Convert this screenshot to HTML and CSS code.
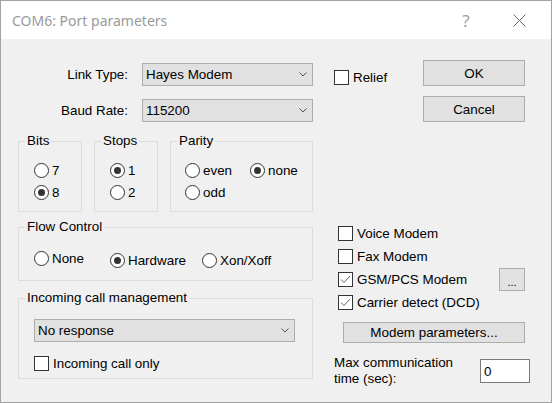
FILE: index.html
```html
<!DOCTYPE html>
<html lang="en">
<head>
    <meta charset="UTF-8">
    <meta name="viewport" content="width=device-width, initial-scale=1.0">
    <title>COM6: Port parameters</title>
    <link rel="stylesheet" href="styles.css">
</head>
<body>
    <div class="window">
        <div class="titlebar">
            <span class="title">COM6: Port parameters</span>
            <span class="help">?</span>
            <span class="close">
                <svg width="13" height="13" viewBox="0 0 13 13"><path d="M0.5 0.5 L12.5 12.5 M12.5 0.5 L0.5 12.5" stroke="#666" stroke-width="1" fill="none"/></svg>
            </span>
        </div>

        <div class="content">
            <div class="left">
                <div class="field first">
                    <span class="field-label">Link Type:</span>
                    <div class="combo">
                        <span>Hayes Modem</span>
                        <svg class="arrow" width="8" height="5" viewBox="0 0 8 5"><polyline points="0.5,0.5 4,4 7.5,0.5" stroke="#555" fill="none"/></svg>
                    </div>
                </div>
                <div class="field">
                    <span class="field-label">Baud Rate:</span>
                    <div class="combo">
                        <span>115200</span>
                        <svg class="arrow" width="8" height="5" viewBox="0 0 8 5"><polyline points="0.5,0.5 4,4 7.5,0.5" stroke="#555" fill="none"/></svg>
                    </div>
                </div>

                <div class="groups">
                    <div class="group bits">
                        <span class="legend">Bits</span>
                        <div class="opt"><span class="radio"></span>7</div>
                        <div class="opt"><span class="radio on"></span>8</div>
                    </div>
                    <div class="group stops">
                        <span class="legend">Stops</span>
                        <div class="opt"><span class="radio on"></span>1</div>
                        <div class="opt"><span class="radio"></span>2</div>
                    </div>
                    <div class="group parity">
                        <span class="legend">Parity</span>
                        <div class="parity-grid">
                            <div class="opt"><span class="radio"></span>even</div>
                            <div class="opt"><span class="radio on"></span>none</div>
                            <div class="opt"><span class="radio"></span>odd</div>
                        </div>
                    </div>
                </div>

                <div class="group flow">
                    <span class="legend">Flow Control</span>
                    <div class="flow-row">
                        <div class="opt opt-none"><span class="radio"></span>None</div>
                        <div class="opt opt-hw"><span class="radio on"></span>Hardware</div>
                        <div class="opt opt-xon"><span class="radio"></span>Xon/Xoff</div>
                    </div>
                </div>

                <div class="group incoming">
                    <span class="legend">Incoming call management</span>
                    <div class="combo wide">
                        <span>No response</span>
                        <svg class="arrow" width="8" height="5" viewBox="0 0 8 5"><polyline points="0.5,0.5 4,4 7.5,0.5" stroke="#555" fill="none"/></svg>
                    </div>
                    <div class="check-row only"><span class="check"></span>Incoming call only</div>
                </div>
            </div>

            <div class="right">
                <div class="top-row">
                    <div class="check-row relief"><span class="check"></span>Relief</div>
                    <button class="btn ok">OK</button>
                </div>
                <button class="btn cancel">Cancel</button>

                <div class="checks">
                    <div class="check-row"><span class="check"></span>Voice Modem</div>
                    <div class="check-row"><span class="check"></span>Fax Modem</div>
                    <div class="check-row">
                        <span class="check"><svg width="13" height="13" viewBox="0 0 13 13"><polyline points="2,6.5 5,9.5 11,3" stroke="#666" stroke-width="1" fill="none"/></svg></span>GSM/PCS Modem
                        <button class="btn dots">...</button>
                    </div>
                    <div class="check-row">
                        <span class="check"><svg width="13" height="13" viewBox="0 0 13 13"><polyline points="2,6.5 5,9.5 11,3" stroke="#666" stroke-width="1" fill="none"/></svg></span>Carrier detect (DCD)
                    </div>
                </div>

                <button class="btn modem">Modem parameters...</button>

                <div class="max-row">
                    <span class="max-label">Max communication<br>time (sec):</span>
                    <div class="edit">0</div>
                </div>
            </div>
        </div>
    </div>
</body>
</html>
```

FILE: styles.css
```css
* {
    box-sizing: border-box;
}

body {
    margin: 0;
    font-family: "Liberation Sans", Arial, sans-serif;
    font-size: 13.4px;
    color: #000;
    background-color: #fff;
}

.window {
    width: 552px;
    height: 403px;
    border: 1px solid #a3a3a3;
    background-color: #f0f0f0;
    display: flex;
    flex-direction: column;
}

.titlebar {
    height: 38px;
    flex-shrink: 0;
    background-color: #fff;
    display: flex;
    align-items: center;
}

.title {
    padding-left: 11px;
    font-family: "Noto Sans", sans-serif;
    font-size: 14px;
    color: #9a9a9a;
}

.help {
    margin-left: auto;
    width: 24px;
    margin-right: 26px;
    text-align: center;
    font-family: "Noto Sans", sans-serif;
    font-size: 17px;
    color: #a0a0a0;
}

.close {
    width: 30px;
    margin-right: 17px;
    display: flex;
    justify-content: center;
}

.content {
    display: grid;
    grid-template-columns: 295px 196px;
    column-gap: 21px;
    padding: 21px 0 0 17px;
}

/* left column */
.field {
    display: flex;
    align-items: center;
    height: 23px;
    margin-top: 13px;
}

.field.first {
    margin-top: 3px;
}

.field-label {
    width: 110px;
    margin-right: 14px;
    text-align: right;
}

.combo {
    width: 171px;
    height: 23px;
    border: 1px solid #adadad;
    background-color: #e1e1e1;
    display: flex;
    align-items: center;
    justify-content: space-between;
    padding: 0 5px 0 3px;
}

.combo.wide {
    width: 261px;
}

.groups {
    display: flex;
    gap: 12px;
    margin-top: 19px;
}

.group {
    position: relative;
    border: 1px solid #dcdcdc;
}

.legend {
    position: absolute;
    top: -9px;
    left: 6px;
    padding: 0 2px;
    line-height: 16px;
    background-color: #f0f0f0;
    white-space: nowrap;
}

.bits,
.stops {
    width: 64px;
    height: 71px;
    padding: 17px 0 0 15px;
}

.parity {
    width: 143px;
    height: 71px;
    padding: 17px 0 0 14px;
}

.parity-grid {
    display: grid;
    grid-template-columns: 65px auto;
}

.opt {
    display: flex;
    align-items: center;
    gap: 3px;
    height: 22px;
}

.radio {
    width: 15px;
    height: 15px;
    border: 1px solid #333;
    border-radius: 50%;
    background-color: #fff;
    display: flex;
    align-items: center;
    justify-content: center;
}

.radio.on::after {
    content: "";
    width: 7px;
    height: 7px;
    border-radius: 50%;
    background-color: #333;
}

.flow {
    height: 54px;
    margin-top: 15px;
    padding: 19px 0 0 15px;
}

.flow-row {
    display: flex;
    align-items: flex-start;
}

.opt-none {
    width: 76px;
}

.opt-hw {
    width: 92px;
    margin-top: 2px;
}

.opt-xon {
    margin-top: 2px;
}

.incoming {
    height: 81px;
    margin-top: 17px;
    padding: 20px 0 0 15px;
}

.check-row {
    display: flex;
    align-items: center;
    gap: 4px;
    height: 23px;
}

.check {
    width: 15px;
    height: 15px;
    border: 1px solid #333;
    background-color: #fff;
    display: flex;
    align-items: center;
    justify-content: center;
}

.check-row.only {
    height: 15px;
    margin-top: 14px;
}

/* right column */
.right {
    display: flex;
    flex-direction: column;
}

.btn {
    font: inherit;
    color: #000;
    background-color: #e1e1e1;
    border: 1px solid #adadad;
    padding: 0;
}

.top-row {
    display: flex;
    height: 26px;
}

.check-row.relief {
    height: 16px;
    margin-top: 9px;
}

.ok,
.cancel {
    width: 102px;
    height: 26px;
}

.ok {
    margin-left: auto;
    margin-right: 5px;
}

.cancel {
    align-self: flex-end;
    margin-top: 10px;
    margin-right: 5px;
}

.checks {
    margin-top: 100px;
    padding-left: 4px;
}

.dots {
    width: 26px;
    height: 23px;
    margin-left: auto;
    margin-right: 5px;
    font-size: 11px;
    padding-top: 5px;
}

.modem {
    width: 182px;
    height: 21px;
    margin-top: 8px;
    margin-left: 9px;
}

.max-row {
    display: flex;
    margin-top: 16px;
}

.max-label {
    line-height: 16px;
    margin-top: -4px;
}

.edit {
    width: 50px;
    height: 24px;
    margin-left: auto;
    border: 1px solid #7a7a7a;
    background-color: #fff;
    padding: 4px 0 0 3px;
}
```
